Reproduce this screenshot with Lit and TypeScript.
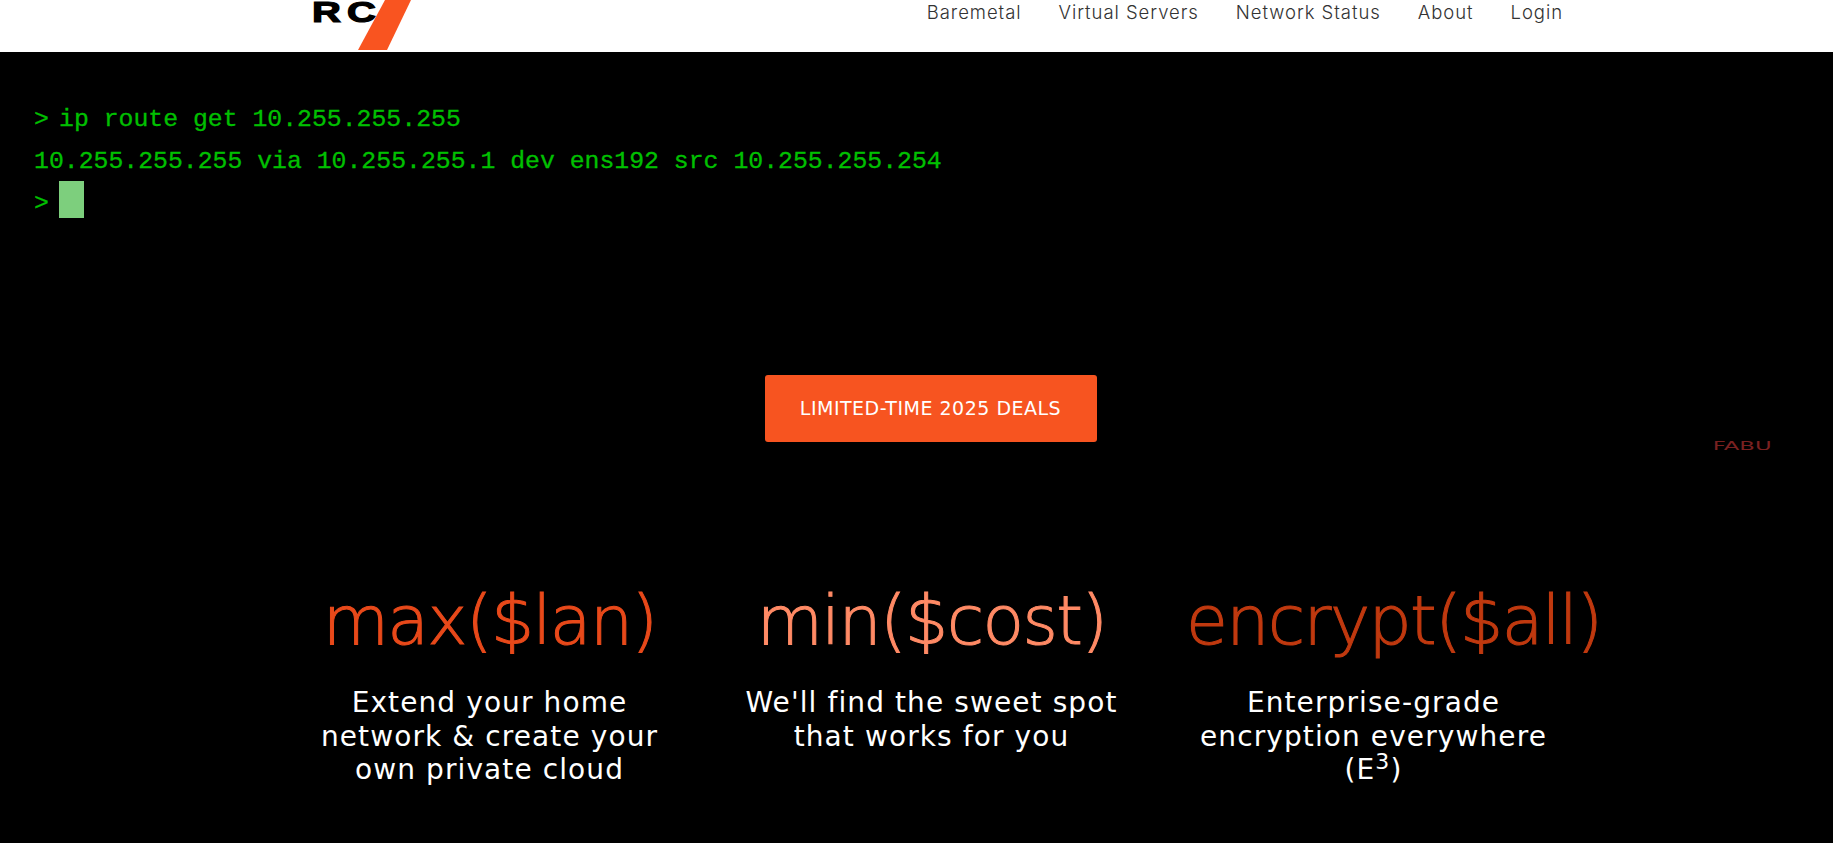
import { LitElement, css, html } from "lit";
import { customElement } from "lit/decorators.js";

const NAV = ["Baremetal", "Virtual Servers", "Network Status", "About", "Login"];

const FEATURES = [
  { title: "max($lan)", tone: "one", text: html`Extend your home network &amp; create your own private cloud` },
  { title: "min($cost)", tone: "two", text: html`We'll find the sweet spot that works for you` },
  { title: "encrypt($all)", tone: "three", text: html`Enterprise-grade encryption everywhere (E<sup>3</sup>)` },
];

@customElement("app-root")
export class AppRoot extends LitElement {
  static styles = css`
    :host {
      display: block;
      height: 843px;
      overflow: hidden;
      background: #000;
      font-family: "DejaVu Sans", "Liberation Sans", sans-serif;
    }

    * {
      box-sizing: border-box;
    }

    header {
      height: 52px;
      background: #fff;
      display: flex;
      justify-content: space-between;
      padding: 0 270px 0 312px;
    }

    .logo {
      position: relative;
      display: flex;
      gap: 14px;
      width: 100px;
      height: 51px;
      padding-top: 2px;
      font-family: "Liberation Sans", sans-serif;
      font-size: 29px;
      line-height: 21px;
      font-weight: 700;
      color: #000;
      -webkit-text-stroke: 1.2px #000;
    }

    .logo span {
      display: block;
      transform: scaleX(1.38);
      transform-origin: left;
    }

    .slash {
      position: absolute;
      left: 0;
      top: 0;
      width: 100px;
      height: 51px;
    }

    nav {
      display: flex;
      gap: 37px;
    }

    nav a {
      font-family: "Inter", sans-serif;
      font-size: 18.5px;
      line-height: 24px;
      font-weight: 300;
      color: #333;
      letter-spacing: 0.95px;
    }

    .terminal {
      height: 266px;
      padding: 46px 34px 0;
      font-family: "Liberation Mono", monospace;
      font-size: 24.8px;
      line-height: 42px;
      color: #00c000;
      -webkit-text-stroke: 0.3px #00c000;
      white-space: pre;
    }

    .prompt {
      display: inline-block;
      width: 25px;
    }

    .cursor {
      display: inline-block;
      width: 25px;
      height: 37px;
      margin-top: -2px;
      background: #7dcf7d;
      vertical-align: -8px;
    }

    .cta {
      position: relative;
      display: flex;
      justify-content: center;
      padding: 57px 0 0 28px;
      height: 258px;
    }

    .cta a {
      width: 332px;
      height: 67px;
      padding-bottom: 1px;
      border-radius: 3px;
      background: #f75420;
      color: #fff;
      font-size: 19px;
      letter-spacing: 0.5px;
      display: flex;
      align-items: center;
      justify-content: center;
    }

    .fabu {
      position: absolute;
      right: 61px;
      top: 120px;
      color: #7a2020;
      font-size: 13px;
      line-height: 16px;
      transform: scaleX(1.75);
      transform-origin: right;
    }

    .features {
      display: grid;
      grid-template-columns: repeat(3, 442px);
      justify-content: center;
      padding-left: 30px;
      text-align: center;
    }

    h2 {
      width: 375px;
      margin: 0 auto 20px;
      font-size: 68px;
      line-height: 90px;
      font-weight: 200;
      letter-spacing: -1.6px;
      white-space: nowrap;
    }

    .one h2 { color: #e8491a; -webkit-text-stroke: 1px #e8491a; }
    .two h2 { color: #ff8a65; -webkit-text-stroke: 1px #ff8a65; }
    .three h2 { color: #c0390f; -webkit-text-stroke: 1px #c0390f; }

    p {
      margin: 0 auto;
      width: 380px;
      color: #fff;
      font-size: 28px;
      line-height: 33.6px;
      letter-spacing: 1.1px;
    }

    sup {
      font-size: 22px;
      line-height: 0;
    }
  `;

  render() {
    return html`
      <header>
        <div class="logo">
          <span>R</span><span>C</span>
          <svg class="slash" viewBox="0 0 100 51">
            <polygon points="73,0 99,0 75,50 46,50" fill="#f95420"></polygon>
          </svg>
        </div>
        <nav>${NAV.map((item) => html`<a>${item}</a>`)}</nav>
      </header>
      <div class="terminal"><span class="prompt">&gt;</span>ip route get 10.255.255.255
10.255.255.255 via 10.255.255.1 dev ens192 src 10.255.255.254
<span class="prompt">&gt;</span><span class="cursor"></span></div>
      <div class="cta">
        <a>LIMITED-TIME 2025 DEALS</a>
        <span class="fabu">FABU</span>
      </div>
      <div class="features">
        ${FEATURES.map(
          (f) => html`
            <div class=${f.tone}>
              <h2>${f.title}</h2>
              <p>${f.text}</p>
            </div>
          `
        )}
      </div>
    `;
  }
}
